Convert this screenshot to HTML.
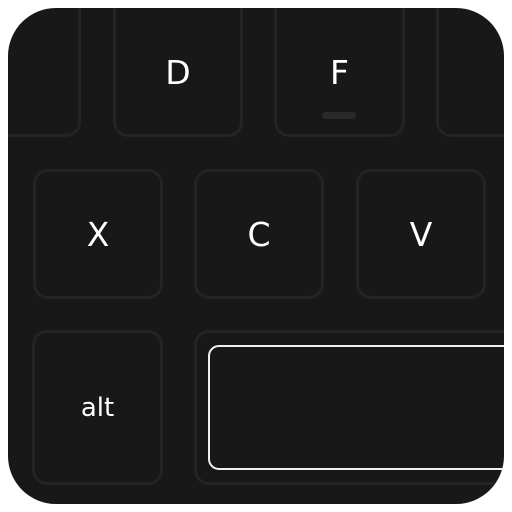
<!DOCTYPE html>
<html><head><meta charset="utf-8"><style>
html,body{margin:0;padding:0;background:#fff;width:512px;height:512px;overflow:hidden}
.pad{position:absolute;left:8px;top:8px;width:496px;height:496px;background:#181818;border-radius:48px;overflow:hidden}
.k{position:absolute;box-sizing:border-box;border:3px solid #252323;border-radius:15px;color:#fff;font-family:"DejaVu Sans","Liberation Sans",sans-serif;font-size:33px;display:flex;align-items:center;justify-content:center}
.bar{position:absolute;left:314px;top:104px;width:34px;height:7px;border-radius:4px;background:#2b2a2a}
.sp{position:absolute;left:200px;top:337px;width:310px;height:125px;box-sizing:border-box;border:2px solid #f2eef2;border-radius:11px}
</style></head><body>
<div class="pad">
<div class="k" style="left:-60px;top:-20px;width:133px;height:149px"></div>
<div class="k" style="left:105px;top:-20px;width:130px;height:149px;padding-top:20px">D</div>
<div class="k" style="left:266px;top:-20px;width:131px;height:149px;padding-top:20px">F</div>
<div class="bar"></div>
<div class="k" style="left:428px;top:-20px;width:130px;height:149px"></div>
<div class="k" style="left:25px;top:161px;width:130px;height:130px">X</div>
<div class="k" style="left:186px;top:161px;width:130px;height:130px">C</div>
<div class="k" style="left:348px;top:161px;width:130px;height:130px">V</div>
<div class="k" style="left:24px;top:322px;width:131px;height:155px;font-size:26px">alt</div>
<div class="k" style="left:186px;top:322px;width:400px;height:155px"></div>
<div class="sp"></div>
</div>
</body></html>
